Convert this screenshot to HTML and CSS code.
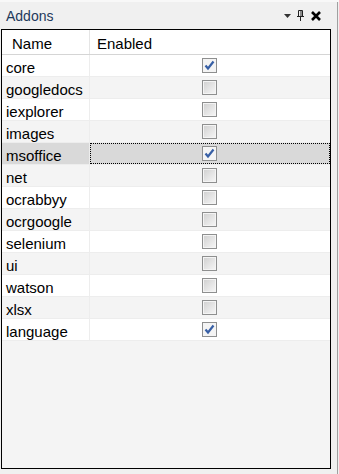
FILE: index.html
```html
<!DOCTYPE html>
<html lang="en">
<head>
  <meta charset="UTF-8">
  <title>Addons</title>
  <link rel="stylesheet" href="styles.css">
</head>
<body>
  <div class="panel">
    <div class="titlebar">
      <span class="title">Addons</span>
      <div class="tools">
        <svg class="tool-menu" width="7" height="4" viewBox="0 0 7 4"><path d="M0 0h7L3.5 4z" fill="#333"/></svg>
        <svg class="tool-pin" width="7" height="11" viewBox="0 0 7 11"><path d="M1.5 0.5h4v6h-4z M0 6.5h7 M3.5 7v4" stroke="#222" stroke-width="1" fill="none"/><path d="M4 1v5.5" stroke="#222" stroke-width="1"/></svg>
        <svg class="tool-close" width="10" height="10" viewBox="0 0 10 10"><path d="M1 1l8 8M9 1l-8 8" stroke="#000" stroke-width="2.6"/></svg>
      </div>
    </div>
    <div class="main">
      <div class="grid">
        <div class="row head">
          <div class="cell name">Name</div>
          <div class="cell enabled">Enabled</div>
        </div>
        <div class="row"><div class="cell name">core</div><div class="cell enabled"><span class="check on"></span></div></div>
        <div class="row alt"><div class="cell name">googledocs</div><div class="cell enabled"><span class="check"></span></div></div>
        <div class="row"><div class="cell name">iexplorer</div><div class="cell enabled"><span class="check"></span></div></div>
        <div class="row alt"><div class="cell name">images</div><div class="cell enabled"><span class="check"></span></div></div>
        <div class="row selected"><div class="cell name">msoffice</div><div class="cell enabled focus"><span class="check on"></span></div></div>
        <div class="row alt"><div class="cell name">net</div><div class="cell enabled"><span class="check"></span></div></div>
        <div class="row"><div class="cell name">ocrabbyy</div><div class="cell enabled"><span class="check"></span></div></div>
        <div class="row alt"><div class="cell name">ocrgoogle</div><div class="cell enabled"><span class="check"></span></div></div>
        <div class="row"><div class="cell name">selenium</div><div class="cell enabled"><span class="check"></span></div></div>
        <div class="row alt"><div class="cell name">ui</div><div class="cell enabled"><span class="check"></span></div></div>
        <div class="row"><div class="cell name">watson</div><div class="cell enabled"><span class="check"></span></div></div>
        <div class="row alt"><div class="cell name">xlsx</div><div class="cell enabled"><span class="check"></span></div></div>
        <div class="row"><div class="cell name">language</div><div class="cell enabled"><span class="check on"></span></div></div>
      </div>
      <div class="edge"></div>
    </div>
  </div>
</body>
</html>
```

FILE: styles.css
```css
body {
  margin: 0;
  background-color: #f0f0f0;
  font-family: "Liberation Sans", Arial, sans-serif;
  color: #000;
}
.panel {
  width: 339px;
  height: 474px;
  display: flex;
  flex-direction: column;
}
.titlebar {
  height: 29px;
  box-sizing: border-box;
  display: flex;
  align-items: center;
  padding: 0 0 0 6px;
  background-color: #f0f0f0;
  border-top: 2px solid #f8f8f8;
}
.title {
  font-size: 14px;
  color: #1e395b;
  flex: 1;
  margin-top: 1px;
}
.tools {
  display: flex;
  align-items: center;
  width: 55px;
}
.tool-menu {
  margin-left: 0;
}
.tool-pin {
  margin-left: 6px;
}
.tool-close {
  margin-left: 7px;
}
.main {
  display: flex;
  flex: 1;
}
.grid {
  margin-left: 1px;
  width: 330px;
  height: 440px;
  box-sizing: border-box;
  border: 1px solid #000;
  background-color: #f4f4f4;
}
.edge {
  margin-left: 6px;
  width: 1px;
  background-color: #a0a0a0;
  margin-top: -27px;
}
.row {
  display: flex;
  height: 22px;
  box-sizing: border-box;
  border-bottom: 1px solid #ededed;
  background-color: #fff;
  font-size: 15px;
}
.row.alt {
  background-color: #f4f4f4;
}
.row.selected {
  background-color: #d9d9d9;
}
.row.head {
  height: 25px;
  border-bottom: 1px solid #d5d5d5;
  background-color: #fff;
}
.cell {
  box-sizing: border-box;
  display: flex;
  align-items: center;
}
.cell.name {
  width: 88px;
  padding-left: 4px;
  padding-top: 3px;
  border-right: 1px solid #ededed;
}
.cell.enabled {
  flex: 1;
  justify-content: center;
  padding-right: 2px;
}
.head .cell {
  padding-top: 2px;
}
.head .cell.name {
  padding-left: 10px;
  border-right-color: #e5e5e5;
}
.head .cell.enabled {
  justify-content: flex-start;
  padding-left: 7px;
}
.cell.focus {
  border: 1px dotted #000;
}
.check {
  width: 15px;
  height: 15px;
  box-sizing: border-box;
  border: 1px solid #8e8f8f;
  box-shadow: inset 0 0 0 1px #f4f4f4;
  background: linear-gradient(135deg, #cfcfcf, #f7f7f7);
}
.check.on {
  background: #f4f4f4 url("data:image/svg+xml,%3Csvg xmlns='http://www.w3.org/2000/svg' width='13' height='13'%3E%3Cpath d='M2.5 6.5l2.5 3L10.5 2.5' stroke='%23375fa5' stroke-width='2.2' fill='none'/%3E%3C/svg%3E") no-repeat center;
}
```
